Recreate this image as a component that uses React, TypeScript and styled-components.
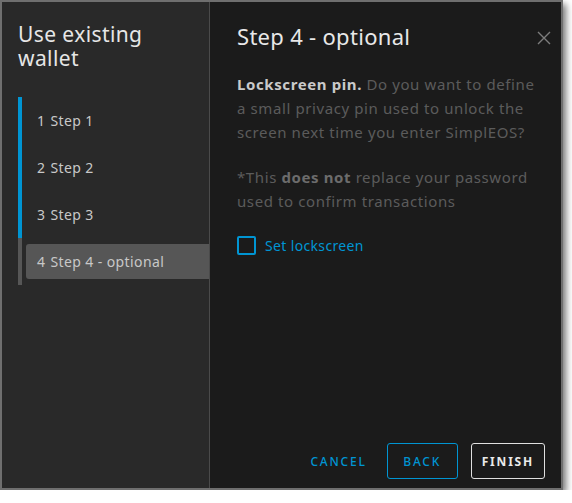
import React from 'react';
import styled, { createGlobalStyle } from 'styled-components';

const GlobalStyle = createGlobalStyle`
  html, body {
    margin: 0;
    padding: 0;
    background: #ffffff;
  }
  body {
    font-family: 'Noto Sans', 'Open Sans', sans-serif;
  }
`;

const Modal = styled.div`
  display: flex;
  width: 563px;
  height: 490px;
  box-sizing: border-box;
  border: 2px solid #6f6f6f;
  box-shadow: 3px 4px 7px rgba(0, 0, 0, 0.55);
  overflow: hidden;
`;

const Sidebar = styled.div`
  width: 208px;
  flex-shrink: 0;
  background: #292929;
  border-right: 1px solid #4a4a4a;
  padding: 20px 0 0 16px;
  box-sizing: border-box;
`;

const SideTitle = styled.h1`
  margin: 0;
  font-size: 21px;
  line-height: 24px;
  letter-spacing: 0.4px;
  font-weight: 400;
  color: #e6e6e6;
`;

const StepList = styled.div`
  margin-top: 27px;
  display: flex;
  flex-direction: column;
`;

const Step = styled.div<{ $done: boolean }>`
  height: 47px;
  box-sizing: border-box;
  padding: 6px 0 6px 4px;
  border-left: 4px solid ${(p) => (p.$done ? '#0095d3' : '#565656')};
`;

const StepLabel = styled.div<{ $active: boolean }>`
  height: 35px;
  display: flex;
  align-items: center;
  padding-left: 11px;
  border-radius: 3px 0 0 3px;
  background: ${(p) => (p.$active ? '#565656' : 'transparent')};
  color: #c8c8c8;
  font-size: 14px;
  letter-spacing: 0.4px;
`;

const StepNum = styled.span`
  margin-right: 5px;
`;

const Content = styled.div`
  flex: 1;
  background: #1b1b1b;
  display: flex;
  flex-direction: column;
  padding: 20px 10px 0 27px;
  box-sizing: border-box;
`;

const Header = styled.div`
  display: flex;
  justify-content: space-between;
  align-items: flex-start;
`;

const Title = styled.h2`
  margin: 0;
  font-size: 22px;
  line-height: 28px;
  letter-spacing: 0.3px;
  font-weight: 400;
  color: #e8e8e8;
`;

const CloseButton = styled.button`
  border: none;
  background: none;
  padding: 0;
  margin-top: 9px;
  width: 14px;
  height: 14px;
  cursor: pointer;
  display: flex;
`;

const Text = styled.p`
  margin: 22px 0 0 0;
  max-width: 306px;
  font-size: 15px;
  line-height: 24px;
  letter-spacing: 0.6px;
  color: #5b5b5b;

  & + & {
    margin-top: 21px;
  }
`;

const Strong = styled.b<{ $bright?: boolean }>`
  font-weight: 700;
  color: ${(p) => (p.$bright ? '#cacaca' : '#6c6c6c')};
`;

const CheckRow = styled.label`
  margin-top: 23px;
  display: flex;
  align-items: center;
  gap: 9px;
  color: #0095d3;
  font-size: 14px;
  letter-spacing: 0.35px;
  cursor: pointer;
`;

const Box = styled.span`
  width: 19px;
  height: 19px;
  box-sizing: border-box;
  border: 2px solid #0095d3;
  border-radius: 2px;
`;

const Footer = styled.div`
  margin-top: auto;
  display: flex;
  justify-content: flex-end;
  gap: 13px;
  padding: 0 6px 9px 0;
`;

const Button = styled.button<{ $variant: 'link' | 'outline' | 'primary' }>`
  height: 36px;
  min-width: ${(p) => (p.$variant === 'link' ? 'auto' : '71px')};
  padding: ${(p) => (p.$variant === 'link' ? '0 6px 0 12px' : '0 10px')};
  box-sizing: border-box;
  border-radius: 3px;
  background: transparent;
  font-family: inherit;
  font-size: 12px;
  font-weight: ${(p) => (p.$variant === 'primary' ? 700 : 500)};
  letter-spacing: 0.15em;
  cursor: pointer;
  border: 1px solid
    ${(p) =>
      p.$variant === 'link' ? 'transparent' : p.$variant === 'outline' ? '#0095d3' : '#e0e0e0'};
  color: ${(p) => (p.$variant === 'primary' ? '#eaeaea' : '#0095d3')};
`;

const steps = ['Step 1', 'Step 2', 'Step 3', 'Step 4 - optional'];

export default function App() {
  return (
    <>
      <GlobalStyle />
      <Modal>
        <Sidebar>
          <SideTitle>
            Use existing
            <br />
            wallet
          </SideTitle>
          <StepList>
            {steps.map((s, i) => (
              <Step key={s} $done={i < 3}>
                <StepLabel $active={i === 3}>
                  <StepNum>{i + 1}</StepNum>
                  {s}
                </StepLabel>
              </Step>
            ))}
          </StepList>
        </Sidebar>
        <Content>
          <Header>
            <Title>Step 4 - optional</Title>
            <CloseButton aria-label="close">
              <svg width="14" height="14" viewBox="0 0 14 14">
                <path d="M1 1 L13 13 M13 1 L1 13" stroke="#7d7d7d" strokeWidth="1.4" fill="none" />
              </svg>
            </CloseButton>
          </Header>
          <Text>
            <Strong $bright>Lockscreen pin.</Strong> Do you want to define a small privacy pin used to
            unlock the screen next time you enter SimplEOS?
          </Text>
          <Text>
            *This <Strong>does not</Strong> replace your password used to confirm transactions
          </Text>
          <CheckRow>
            <Box />
            Set lockscreen
          </CheckRow>
          <Footer>
            <Button $variant="link">CANCEL</Button>
            <Button $variant="outline">BACK</Button>
            <Button $variant="primary">FINISH</Button>
          </Footer>
        </Content>
      </Modal>
    </>
  );
}
